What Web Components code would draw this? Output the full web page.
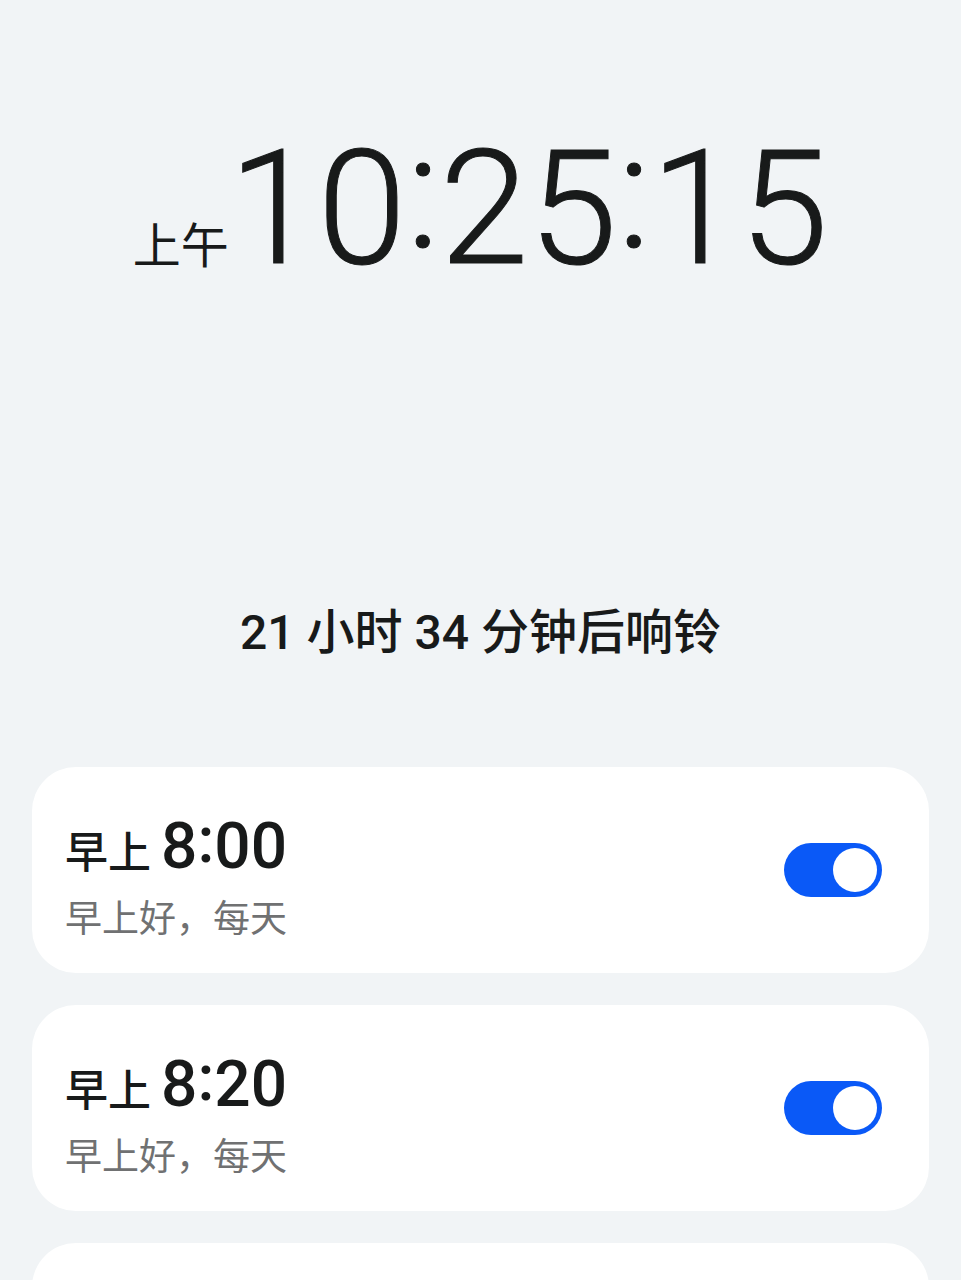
<!DOCTYPE html>
<html lang="zh-CN">
<head>
<meta charset="utf-8">
<meta name="viewport" content="width=device-width, initial-scale=1">
<title>闹钟</title>
<style>
  body {
    margin: 0;
    background: #f1f4f6;
    color: #181a1a;
    font-family: Roboto, "Noto Sans CJK SC", sans-serif;
  }
</style>
</head>
<body>
<alarm-app></alarm-app>
<script>
const alarms = [
  { period: '早上', time: '8:00', note: '早上好，每天', on: true },
  { period: '早上', time: '8:20', note: '早上好，每天', on: true }
];

// colons sit at the middle of the digits, not on the baseline
const withColons = (time) => time.split(':').join('<span class="colon">:</span>');

class ClockFace extends HTMLElement {
  constructor() {
    super();
    this.attachShadow({ mode: 'open' });
  }

  connectedCallback() {
    this.shadowRoot.innerHTML = `
      <style>
        :host {
          display: flex;
          justify-content: center;
          align-items: baseline;
          white-space: nowrap;
        }
        .period {
          font: 400 48px/56px "Noto Sans CJK SC", sans-serif;
        }
        time {
          font-size: 160px;
          font-weight: 300;
          line-height: 192px;
          -webkit-text-stroke: 1px currentColor;
        }
        .colon {
          line-height: 1;
          vertical-align: 16px;
        }
      </style>
      <span class="period">${this.getAttribute('period')}</span>
      <time>${withColons(this.getAttribute('time'))}</time>
    `;
  }
}

class ToggleSwitch extends HTMLElement {
  constructor() {
    super();
    this.attachShadow({ mode: 'open' });
  }

  connectedCallback() {
    this.shadowRoot.innerHTML = `
      <style>
        :host {
          display: block;
          flex: none;
        }
        input {
          appearance: none;
          display: flex;
          align-items: center;
          box-sizing: border-box;
          width: 98px;
          height: 54px;
          margin: 0;
          padding: 0 5px;
          border-radius: 27px;
          background: #d5d8da;
          cursor: pointer;
        }
        input::before {
          content: "";
          width: 44px;
          height: 44px;
          border-radius: 50%;
          background: #fff;
        }
        input:checked {
          justify-content: flex-end;
          background: #0a59f7;
        }
      </style>
      <input type="checkbox" role="switch" aria-label="${this.getAttribute('label')}">
    `;
    this.shadowRoot.querySelector('input').checked = this.hasAttribute('checked');
  }
}

class AlarmCard extends HTMLElement {
  constructor() {
    super();
    this.attachShadow({ mode: 'open' });
  }

  connectedCallback() {
    const content = `
      <div class="info">
        <div class="when">
          <span class="period">${this.getAttribute('period')}</span>
          <time>${withColons(this.getAttribute('time') || '')}</time>
        </div>
        <div class="note"><slot></slot></div>
      </div>
      <slot name="control"></slot>
    `;
    this.shadowRoot.innerHTML = `
      <style>
        :host {
          display: flex;
          justify-content: space-between;
          align-items: center;
          box-sizing: border-box;
          min-height: 206px;
          padding: 28px 47px 28px 33px;
          border-radius: 44px;
          background: #fff;
        }
        .info {
          padding-top: 12px;
        }
        .when {
          display: flex;
          align-items: baseline;
          gap: 10px;
          font-weight: 500;
        }
        .period {
          font: 500 43px/56px "Noto Sans CJK SC", sans-serif;
        }
        time {
          font-size: 64px;
          line-height: 80px;
        }
        .colon {
          line-height: 1;
          vertical-align: 6px;
        }
        .note {
          color: #707172;
          font-family: "Noto Sans CJK SC", sans-serif;
          font-size: 37px;
          line-height: 58px;
        }
      </style>
      ${this.hasAttribute('empty') ? '' : content}
    `;
  }
}

class AlarmApp extends HTMLElement {
  constructor() {
    super();
    this.attachShadow({ mode: 'open' });
  }

  connectedCallback() {
    this.shadowRoot.innerHTML = `
      <style>
        :host {
          display: block;
          height: 100vh;
          overflow: hidden;
        }
        main {
          padding: 113px 32px 32px;
        }
        .next {
          margin: 292px 0 98px;
          font-size: 48px;
          font-weight: 500;
          line-height: 72px;
          text-align: center;
        }
        .list {
          display: flex;
          flex-direction: column;
          gap: 32px;
        }
      </style>
      <main>
        <clock-face period="上午" time="10:25:15"></clock-face>
        <p class="next">21 小时 34 分钟后响铃</p>
        <div class="list">
          ${alarms.map(a => `
            <alarm-card period="${a.period}" time="${a.time}">
              ${a.note}
              <toggle-switch slot="control" label="${a.period} ${a.time}" ${a.on ? 'checked' : ''}></toggle-switch>
            </alarm-card>
          `).join('')}
          <alarm-card empty></alarm-card>
        </div>
      </main>
    `;
  }
}

customElements.define('clock-face', ClockFace);
customElements.define('toggle-switch', ToggleSwitch);
customElements.define('alarm-card', AlarmCard);
customElements.define('alarm-app', AlarmApp);
</script>
</body>
</html>
